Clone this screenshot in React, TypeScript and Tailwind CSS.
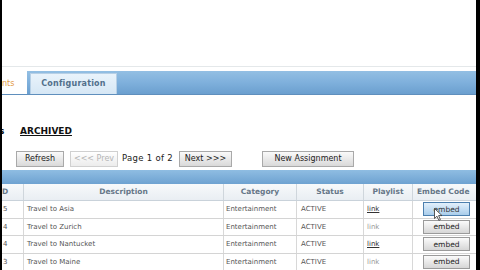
import React from "react";

const font = { fontFamily: '"DejaVu Sans", Verdana, sans-serif' };

function Btn({ children, w, disabled }: { children: React.ReactNode; w: string; disabled?: boolean }) {
  return (
    <div
      className={`${w} h-[16px] flex items-center justify-center border border-[#a9a9a9] bg-gradient-to-b from-[#fafafa] to-[#d9d9d9] text-[8px] ${disabled ? "text-[#b5b5b5] border-[#d0d0d0] from-white to-[#ececec]" : "text-[#222]"}`}
    >
      {children}
    </div>
  );
}

const rows = [
  { id: "5", d: "Travel to Asia", u: true, hover: true },
  { id: "4", d: "Travel to Zurich", u: false },
  { id: "4", d: "Travel to Nantucket", u: true },
  { id: "3", d: "Travel to Maine", u: false },
];

export default function App() {
  return (
    <div className="w-[480px] h-[270px] bg-black flex overflow-hidden" style={font}>
      <div className="ml-[2px] w-[474px] h-[270px] bg-white flex flex-col relative overflow-hidden">
        <div className="h-[67px] shrink-0 border-b border-[#e4e8ea]" />
        <div className="h-[4px] shrink-0" />
        {/* tabs bar */}
        <div className="h-[24px] shrink-0 flex bg-gradient-to-b from-[#93bfe3] via-[#7fb0dc] to-[#6b9fcf] border-b border-[#5f8fbd]">
          <div className="w-[25px] h-full bg-white flex items-center pt-[3px] overflow-hidden">
            <span className="text-[8px] text-[#e39a48]">nts</span>
          </div>
          <div className="w-[3px]" />
          <div className="w-[87px] mt-[2px] bg-gradient-to-b from-[#e9f3fb] to-[#d6e7f5] border-t border-x border-[#b7d0e6] flex items-center justify-center">
            <span className="text-[8px] font-bold text-[#52708c] tracking-[0.2px]">Configuration</span>
          </div>
        </div>
        {/* archived */}
        <div className="h-[43px] shrink-0 flex items-end relative">
          <span className="absolute left-[-3px] bottom-0 text-[9px] font-bold text-[#111]">s</span>
          <span className="ml-[18px] text-[9px] font-semibold underline text-[#111]">ARCHIVED</span>
        </div>
        {/* buttons */}
        <div className="h-[17px] mt-[12px] shrink-0 flex items-center">
          <div className="ml-[14px]" />
          <Btn w="w-[48px]">Refresh</Btn>
          <div className="w-[6px]" />
          <Btn w="w-[48px]" disabled>&lt;&lt;&lt; Prev</Btn>
          <span className="ml-[4px] text-[8.5px] text-[#222] tracking-[0.3px]">Page 1 of 2</span>
          <div className="w-[6px]" />
          <Btn w="w-[53px]">Next &gt;&gt;&gt;</Btn>
          <div className="w-[30px]" />
          <Btn w="w-[92px]">New Assignment</Btn>
        </div>
        {/* blue band */}
        <div className="h-[14px] mt-[3px] shrink-0 bg-gradient-to-b from-[#8fbde2] to-[#6ea2d1]" />
        {/* header */}
        <div className="h-[17px] shrink-0 grid grid-cols-[22px_200px_73px_67px_49px_63px] bg-gradient-to-b from-[#f7f9fb] to-[#e9eef3] border-b border-[#c9d2da] text-[7.5px] text-[#667788] font-semibold">
          <div className="flex items-center border-r border-[#cfd6dc]">D</div>
          <div className="flex items-center justify-center border-r border-[#cfd6dc]">Description</div>
          <div className="flex items-center justify-center border-r border-[#cfd6dc]">Category</div>
          <div className="flex items-center justify-center border-r border-[#cfd6dc]">Status</div>
          <div className="flex items-center justify-center border-r border-[#cfd6dc]">Playlist</div>
          <div className="flex items-center pl-[4px] whitespace-nowrap">Embed Code</div>
        </div>
        {rows.map((r, i) => (
          <div
            key={i}
            className="h-[17.5px] shrink-0 grid grid-cols-[22px_200px_73px_67px_49px_63px] border-b border-[#d4d4d4] text-[7px] text-[#555]"
          >
            <div className="flex items-center border-r border-[#d8d8d8] pl-[1px]">{r.id}</div>
            <div className="flex items-center border-r border-[#d8d8d8] pl-[3px]">{r.d}</div>
            <div className="flex items-center border-r border-[#d8d8d8] pl-[2px]">Entertainment</div>
            <div className="flex items-center border-r border-[#d8d8d8] pl-[4px]">ACTIVE</div>
            <div className={`flex items-center border-r border-[#d8d8d8] pl-[3px] ${r.u ? "underline text-[#333]" : "text-[#999]"}`}>link</div>
            <div className="flex items-center pl-[10px]">
              <div
                className={`w-[47px] h-[14px] flex items-center justify-center border text-[7.5px] ${
                  r.hover
                    ? "border-[#4c7fae] bg-gradient-to-b from-[#e3f0fb] to-[#a9cdeb] text-[#333]"
                    : "border-[#9a9a9a] bg-gradient-to-b from-[#fbfbfb] to-[#d6d6d6] text-[#222]"
                }`}
              >
                embed
              </div>
            </div>
          </div>
        ))}
        {/* cursor */}
        <svg className="absolute left-[432px] top-[208px]" width="9" height="13" viewBox="0 0 9 13">
          <path d="M0.5 0.5 L0.5 10.5 L3 8.2 L4.8 12.3 L6.4 11.6 L4.6 7.6 L8 7.6 Z" fill="#fff" stroke="#333" strokeWidth="0.8" />
        </svg>
      </div>
    </div>
  );
}
